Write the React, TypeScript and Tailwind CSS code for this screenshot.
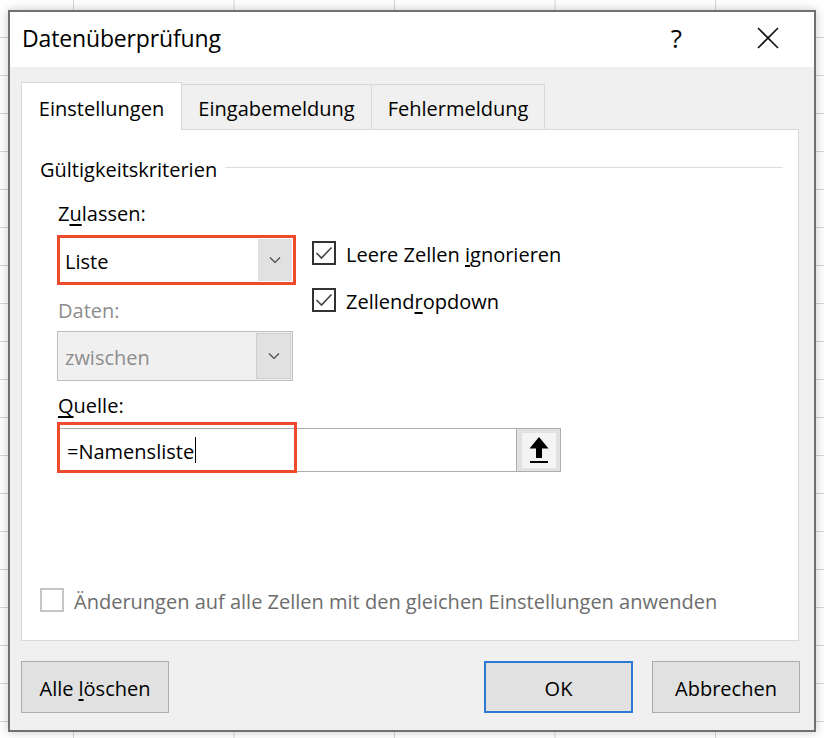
import { ReactNode } from "react";

const font = { fontFamily: '"Open Sans", "Noto Sans", sans-serif' };

function Chevron() {
    return (
        <svg width="12" height="8" viewBox="0 0 12 8">
            <polyline points="1,1.5 6,6.5 11,1.5" fill="none" stroke="#444" strokeWidth="1.1" />
        </svg>
    );
}

function Check({ checked, disabled, children }: { checked?: boolean, disabled?: boolean, children: ReactNode }) {
    return (
        <div className="flex items-center gap-[10px]">
            <div className={"w-[24px] h-[24px] border-2 flex items-center justify-center " + (disabled ? "border-[#c6c6c6] bg-white" : "border-[#333333] bg-white")}>
                {checked && (
                    <svg width="20" height="20" viewBox="0 0 20 20">
                        <polyline points="2.5,10 7.5,15 17.5,4.5" fill="none" stroke="#444" strokeWidth="1.6" />
                    </svg>
                )}
            </div>
            <span className={"text-[20px] leading-[27px] pt-[3px] " + (disabled ? "text-[#6d6d6d]" : "text-black")}>{children}</span>
        </div>
    );
}

function Button({ children, primary, className = "" }: { children: ReactNode, primary?: boolean, className?: string }) {
    return (
        <div className={"h-[52px] w-[148px] flex items-center justify-center pt-[4px] bg-[#e1e1e1] text-[20px] text-black " + (primary ? "border-2 border-[#2c7ad6]" : "border border-[#adadad]") + " " + className}>
            {children}
        </div>
    );
}

export default function App() {
    return (
        <div
            className="w-[824px] h-[738px] overflow-hidden bg-white bg-[linear-gradient(to_right,#d6d6d6_1px,transparent_1px),linear-gradient(to_bottom,#d6d6d6_1px,transparent_1px)] bg-[size:160.5px_38px] bg-[position:73px_37px] pt-[10px] pl-[8px]"
            style={font}
        >
            <div className="w-[808px] h-[722px] border-2 border-[#707070] bg-[#f0f0f0] flex flex-col shadow-[0_0_10px_rgba(0,0,0,0.22)]">
                {/* title bar */}
                <div className="h-[55px] bg-white flex items-center pl-[12px] shrink-0">
                    <span className="text-[23px] tracking-[-0.15px] text-black leading-none mt-[-2px]">Datenüberprüfung</span>
                    <span className="ml-auto text-[26px] text-black leading-none mt-[-4px] mr-[75px]">?</span>
                    <svg width="22" height="22" viewBox="0 0 22 22" className="mr-[35px] mt-[-4px]">
                        <line x1="1" y1="1" x2="21" y2="21" stroke="#111" strokeWidth="1.6" />
                        <line x1="21" y1="1" x2="1" y2="21" stroke="#111" strokeWidth="1.6" />
                    </svg>
                </div>

                {/* tabs */}
                <div className="flex items-end pl-[11px] mt-[15px] h-[48px] text-[20px] text-black relative z-10">
                    <div className="h-[48px] w-[161px] bg-white border border-b-0 border-[#d9d9d9] flex items-center justify-center pt-[4px]">Einstellungen</div>
                    <div className="h-[46px] w-[190px] bg-[#f0f0f0] border border-l-0 border-[#d9d9d9] flex items-center justify-center pt-[4px]">Eingabemeldung</div>
                    <div className="h-[46px] w-[173px] bg-[#f0f0f0] border border-l-0 border-[#d9d9d9] flex items-center justify-center pt-[4px]">Fehlermeldung</div>
                </div>

                {/* panel */}
                <div className="ml-[11px] mt-[-1px] w-[778px] h-[512px] bg-white border border-[#d9d9d9] flex flex-col">
                    <div className="flex items-center mt-[24px] pl-[18px] pr-[15px]">
                        <span className="text-[20px] leading-[27px] pt-[2px] text-black">Gültigkeitskriterien</span>
                        <div className="flex-1 h-px bg-[#dcdcdc] ml-[8px] mt-[-2px]" />
                    </div>

                    <div className="pl-[36px] mt-[15px] text-[20px] leading-[27px] pt-[2px] text-black">
                        Z<span className="underline underline-offset-[3px]">u</span>lassen:
                    </div>

                    <div className="flex pl-[35px] mt-[8px]">
                        <div className="flex flex-col">
                            <div className="w-[239px] h-[50px] border-[3px] border-[#ee4a2c] bg-white flex items-stretch">
                                <div className="flex-1 flex items-center pl-[5px] pt-[3px] text-[20px] text-black">Liste</div>
                                <div className="w-[34px] my-[1px] mr-[1px] bg-[#e1e1e1] flex items-center justify-center">
                                    <Chevron />
                                </div>
                            </div>
                            <div className="mt-[10px] text-[20px] leading-[27px] pt-[2px] text-[#8d8d8d] pl-[1px]">Daten:</div>
                            <div className="mt-[7px] w-[236px] h-[50px] border border-[#bcbcbc] bg-[#f0f0f0] flex items-stretch">
                                <div className="flex-1 flex items-center pl-[7px] pt-[3px] text-[20px] text-[#8d8d8d]">zwischen</div>
                                <div className="w-[35px] my-[1px] mr-[1px] bg-[#e1e1e1] border border-[#cfcfcf] flex items-center justify-center">
                                    <Chevron />
                                </div>
                            </div>
                        </div>
                        <div className="flex flex-col ml-[16px] mt-[3px] gap-[17px]">
                            <Check checked>
                                Leere Zellen <span className="underline underline-offset-[3px]">i</span>gnorieren
                            </Check>
                            <Check checked>
                                Zellend<span className="underline underline-offset-[3px]">r</span>opdown
                            </Check>
                        </div>
                    </div>

                    <div className="pl-[36px] mt-[9px] text-[20px] leading-[27px] pt-[2px] text-black">
                        <span className="underline underline-offset-[3px]">Q</span>uelle:
                    </div>

                    <div className="relative ml-[35px] mt-[9px] flex items-stretch h-[44px] w-[504px]">
                        <div className="flex-1 bg-white border border-[#adadad] flex items-center pl-[9px] pt-[3px] text-[20px] text-black">
                            =Namensliste
                            <span className="w-px h-[26px] bg-black ml-[1px] mt-[-3px]" />
                        </div>
                        <div className="w-[44px] bg-[#e1e1e1] border border-l-0 border-[#adadad] flex items-center justify-center">
                            <div className="w-[34px] h-[35px] bg-[#f4f4f4] flex items-center justify-center">
                                <svg width="22" height="28" viewBox="0 0 22 28">
                                    <polygon points="11,1 20.5,12.5 14,12.5 14,22 8,22 8,12.5 1.5,12.5" fill="#000" />
                                    <rect x="2" y="25" width="18" height="2" fill="#000" />
                                </svg>
                            </div>
                        </div>
                        <div className="absolute left-[0px] top-[-6px] w-[240px] h-[51px] border-[3px] border-[#ee4a2c]" />
                    </div>

                    <div className="mt-auto mb-[25px] pl-[18px]">
                        <Check disabled>Änderungen auf alle Zellen mit den gleichen Einstellungen anwenden</Check>
                    </div>
                </div>

                {/* buttons */}
                <div className="flex mt-[20px] pl-[11px]">
                    <Button>
                        Alle <span className="underline underline-offset-[3px] ml-[5px]">l</span>öschen
                    </Button>
                    <Button primary className="ml-auto w-[149px]">OK</Button>
                    <Button className="ml-[19px] mr-[14px]">Abbrechen</Button>
                </div>
            </div>
        </div>
    );
}
